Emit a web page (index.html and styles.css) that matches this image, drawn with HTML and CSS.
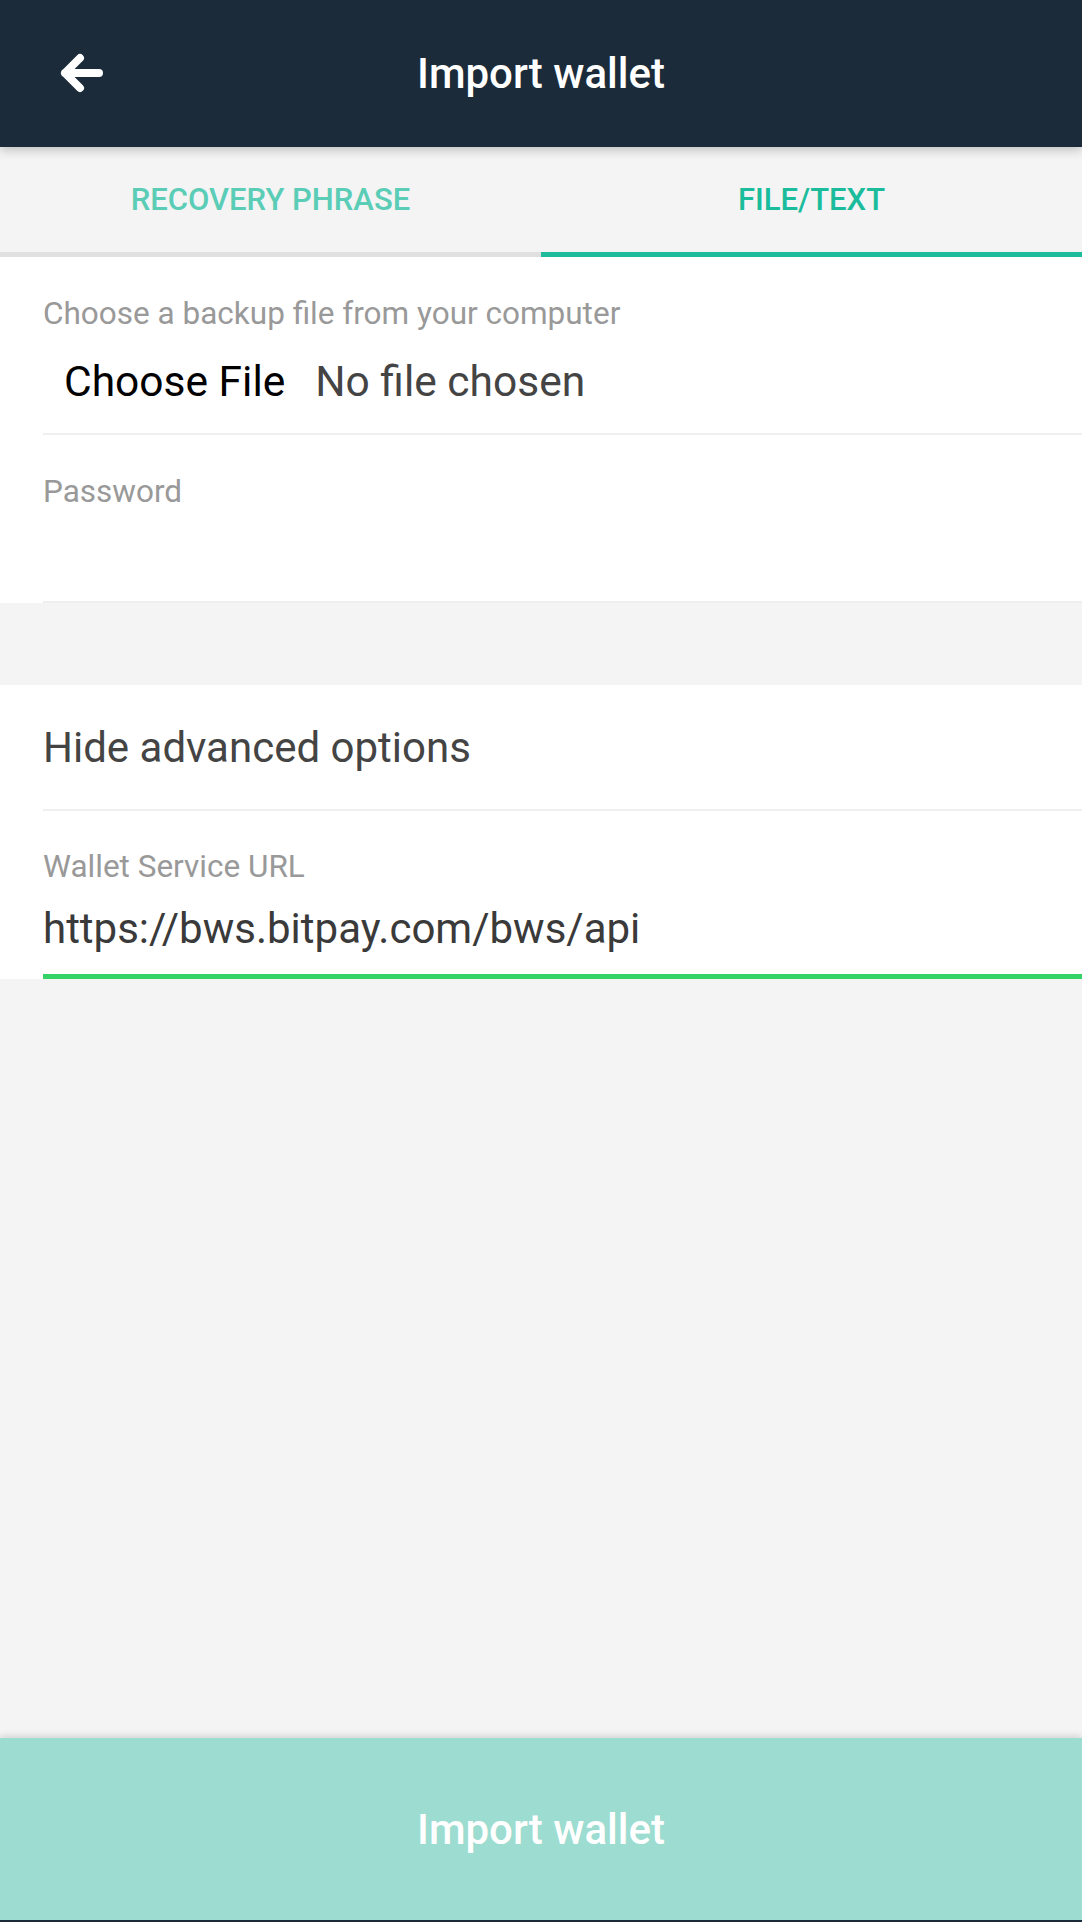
FILE: index.html
```html
<!DOCTYPE html>
<html lang="en">
<head>
<meta charset="utf-8">
<title>Import wallet</title>
<link rel="stylesheet" href="styles.css">
</head>
<body>
<div class="app">
  <header class="toolbar">
    <button class="back" aria-label="Back">
      <svg width="48" height="44" viewBox="0 0 48 44">
        <path d="M7 22 H41 M7 22 L22 7 M7 22 L22 37" fill="none" stroke="#ffffff" stroke-width="8" stroke-linecap="round" stroke-linejoin="round"/>
      </svg>
    </button>
    <h1 class="title">Import wallet</h1>
  </header>

  <nav class="tabs">
    <div class="tab">Recovery phrase</div>
    <div class="tab active">File/Text</div>
  </nav>

  <main class="content">
    <section class="list">
      <div class="item">
        <div class="item-inner file-row">
          <div class="label">Choose a backup file from your computer</div>
          <div class="file-input">
            <span class="file-btn">Choose File</span>
            <span class="file-name">No file chosen</span>
          </div>
        </div>
      </div>
      <div class="item">
        <div class="item-inner pw-row">
          <div class="label">Password</div>
          <div class="input-empty"></div>
        </div>
      </div>
    </section>

    <section class="list list-second">
      <div class="item">
        <div class="item-inner toggle-row">Hide advanced options</div>
      </div>
      <div class="item">
        <div class="item-inner url-row">
          <div class="label">Wallet Service URL</div>
          <div class="input-value">https://bws.bitpay.com/bws/api</div>
        </div>
      </div>
    </section>
  </main>

  <footer class="footer">
    <button class="import-btn">Import wallet</button>
  </footer>
</div>
</body>
</html>
```

FILE: styles.css
```css
* { box-sizing: border-box; }

html, body {
  margin: 0;
  padding: 0;
}

body {
  font-family: Roboto, "Noto Sans", "Liberation Sans", sans-serif;
  background: #f4f4f4;
  width: 1082px;
  height: 1922px;
  overflow: hidden;
}

.app {
  display: flex;
  flex-direction: column;
  height: 1922px;
}

.toolbar {
  position: relative;
  z-index: 2;
  height: 147px;
  flex: 0 0 147px;
  background: #1b2b3a;
  display: flex;
  align-items: center;
  justify-content: center;
  box-shadow: 0 3px 10px rgba(0, 0, 0, 0.22);
}

.back {
  position: absolute;
  left: 58px;
  top: 51px;
  width: 48px;
  height: 44px;
  padding: 0;
  border: 0;
  background: none;
  display: flex;
}

.title {
  margin: 0;
  color: #ffffff;
  font-size: 42px;
  font-weight: 500;
  line-height: 50px;
}

.tabs {
  flex: 0 0 110px;
  display: flex;
  background: #f4f4f4;
}

.tab {
  flex: 1;
  display: flex;
  align-items: center;
  justify-content: center;
  text-transform: uppercase;
  font-size: 31px;
  font-weight: 500;
  color: #5bcdb6;
  border-bottom: 5px solid #e0e0e0;
}

.tab.active {
  color: #1abc9c;
  border-bottom-color: #1fbc9c;
}

.content {
  flex: 1;
  display: flex;
  flex-direction: column;
}

.list {
  background: #ffffff;
}

.list-second {
  margin-top: 82px;
}

.item {
  padding-left: 43px;
  background: #ffffff;
}

.item-inner {
  border-bottom: 2px solid #efefef;
}

.label {
  font-size: 31.5px;
  line-height: 38px;
  color: #999999;
}

.file-row {
  padding-top: 38px;
  height: 178px;
}

.file-input {
  margin-top: 24px;
  display: flex;
  gap: 30px;
  padding-left: 21px;
  font-size: 42.5px;
  line-height: 50px;
}

.file-btn { color: #000000; }
.file-name { color: #444444; }

.pw-row {
  padding-top: 38px;
  height: 168px;
}

.input-empty {
  height: 50px;
}

.toggle-row {
  height: 126px;
  display: flex;
  align-items: center;
  font-size: 42px;
  color: #444444;
}

.url-row {
  padding-top: 37px;
  height: 168px;
  border-bottom: 5px solid #34d368;
}

.input-value {
  margin-top: 18px;
  font-size: 42px;
  line-height: 50px;
  color: #3a3a3a;
}

.footer {
  position: relative;
  flex: 0 0 184px;
  background: #9ddcd0;
  border-bottom: 2px solid #1b2b3a;
  box-shadow: 0 -2px 7px rgba(0, 0, 0, 0.14);
  display: flex;
}

.import-btn {
  flex: 1;
  border: 0;
  background: transparent;
  color: #ffffff;
  font-family: Roboto, "Noto Sans", "Liberation Sans", sans-serif;
  font-size: 42px;
  font-weight: 500;
  padding: 0;
}
```
